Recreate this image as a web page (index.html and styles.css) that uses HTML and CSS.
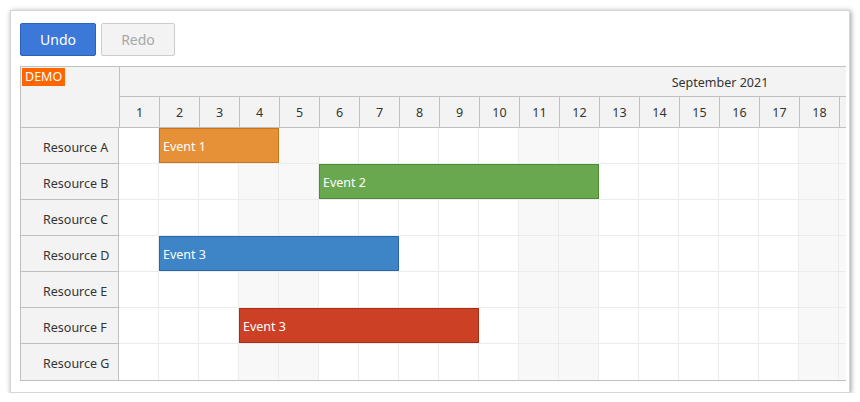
FILE: index.html
```html
<!DOCTYPE html>
<html lang="en">
<head>
  <meta charset="UTF-8" />
  <title>Scheduler Undo/Redo</title>
  <link rel="stylesheet" href="styles.css">
</head>
<body>
  <div class="card">
    <div class="toolbar">
      <button class="btn btn-primary">Undo</button>
      <button class="btn btn-disabled">Redo</button>
    </div>

    <!-- SCHEDULER -->
    <div class="scheduler">
      <div class="sched-header">
        <div class="corner"><span class="demo">DEMO</span></div>
        <div class="timeline-head">
          <div class="month">September 2021</div>
          <div class="days" id="days"></div>
        </div>
      </div>
      <div class="sched-body" id="rows"></div>
    </div>
  </div>

  <script>
    const resources = ["Resource A", "Resource B", "Resource C", "Resource D", "Resource E", "Resource F", "Resource G"];
    const events = [
      { row: 0, start: 2, days: 3, text: "Event 1", cls: "ev-orange" },
      { row: 1, start: 6, days: 7, text: "Event 2", cls: "ev-green" },
      { row: 3, start: 2, days: 6, text: "Event 3", cls: "ev-blue" },
      { row: 5, start: 4, days: 6, text: "Event 3", cls: "ev-red" }
    ];
    const weekend = [4, 5, 11, 12, 18, 19];
    const visibleDays = 19;

    function renderDays() {
      const days = document.getElementById('days');
      for (let d = 1; d <= visibleDays; d++) {
        const cell = document.createElement('div');
        cell.className = 'day';
        cell.textContent = d < visibleDays ? d : '';
        days.appendChild(cell);
      }
    }

    function renderRows() {
      const body = document.getElementById('rows');
      resources.forEach((name, i) => {
        const row = document.createElement('div');
        row.className = 'row';
        const head = document.createElement('div');
        head.className = 'row-header';
        head.textContent = name;
        row.appendChild(head);

        const lane = document.createElement('div');
        lane.className = 'lane';
        for (let d = 1; d <= visibleDays; d++) {
          const cell = document.createElement('div');
          cell.className = weekend.includes(d) ? 'cell weekend' : 'cell';
          lane.appendChild(cell);
        }
        events.filter(e => e.row === i).forEach(e => {
          const ev = document.createElement('div');
          ev.className = 'event ' + e.cls;
          ev.style.left = ((e.start - 1) * 40) + 'px';
          ev.style.width = (e.days * 40) + 'px';
          ev.textContent = e.text;
          lane.appendChild(ev);
        });
        row.appendChild(lane);
        body.appendChild(row);
      });
    }

    renderDays();
    renderRows();
  </script>
</body>
</html>
```

FILE: styles.css
```css
body {
  font-family: 'Segoe UI', 'Noto Sans', sans-serif;
  background: #fff;
  margin: 0;
  padding: 10px 0 0 10px;
  color: #333;
}
.card {
  width: 829px;
  height: 369px;
  padding: 12px 0 0 9px;
  background: #fff;
  border: 1px solid #d6d6d6;
  box-shadow: 1px 1px 5px rgba(0, 0, 0, 0.4);
  overflow: hidden;
}
.toolbar {
  display: flex;
  gap: 5px;
  margin-bottom: 10px;
}
.btn {
  height: 33px;
  font-family: inherit;
  font-size: 14px;
  border-radius: 2px;
  padding: 0 18px;
  cursor: pointer;
}
.btn-primary {
  width: 76px;
  background: #3c78d8;
  border: 1px solid #2a62bc;
  color: #fff;
}
.btn-disabled {
  width: 74px;
  background: #f3f3f3;
  border: 1px solid #ccc;
  color: #a8a8a8;
}

/* scheduler */
.scheduler {
  width: 825px;
  border-top: 1px solid #c0c0c0;
  border-left: 1px solid #c0c0c0;
  border-bottom: 1px solid #c0c0c0;
  overflow: hidden;
  font-size: 12.5px;
}
.sched-header {
  display: flex;
  background: #f3f3f3;
  border-bottom: 1px solid #c0c0c0;
}
.corner {
  width: 98px;
  flex: none;
  height: 60px;
  border-right: 1px solid #c0c0c0;
}
.demo {
  display: inline-block;
  margin: 1px 0 0 1px;
  padding: 0 3px;
  height: 18px;
  line-height: 18px;
  background: #ff6600;
  color: #fff;
}
.timeline-head {
  width: 1200px;
  flex: none;
}
.month {
  height: 29px;
  line-height: 31px;
  text-align: center;
  border-bottom: 1px solid #c0c0c0;
}
.days {
  display: flex;
  height: 30px;
}
.day {
  width: 40px;
  flex: none;
  box-sizing: border-box;
  border-right: 1px solid #c0c0c0;
  text-align: center;
  line-height: 32px;
}
.row {
  display: flex;
  height: 36px;
}
.row:not(:last-child) .cell,
.row:not(:last-child) .row-header {
  border-bottom: 1px solid #ebebeb;
}
.row:not(:last-child) .row-header {
  border-bottom-color: #c0c0c0;
}
.row-header {
  width: 98px;
  flex: none;
  box-sizing: border-box;
  padding: 3px 0 0 22px;
  background: #f3f3f3;
  border-right: 1px solid #c0c0c0;
  display: flex;
  align-items: center;
}
.lane {
  position: relative;
  display: flex;
  flex: none;
  width: 1200px;
}
.cell {
  width: 40px;
  flex: none;
  box-sizing: border-box;
  border-right: 1px solid #ebebeb;
  background: #fff;
}
.cell.weekend {
  background: #f8f8f8;
}
.event {
  position: absolute;
  top: 0;
  height: 35px;
  box-sizing: border-box;
  padding-left: 3px;
  line-height: 35px;
  color: #fff;
  white-space: nowrap;
  overflow: hidden;
}
.ev-orange {
  background: #e69138;
  border: 1px solid #c97419;
}
.ev-green {
  background: #6aa84f;
  border: 1px solid #4e8a35;
}
.ev-blue {
  background: #3d85c6;
  border: 1px solid #2a67a6;
}
.ev-red {
  background: #cc4125;
  border: 1px solid #a92d14;
}
```
